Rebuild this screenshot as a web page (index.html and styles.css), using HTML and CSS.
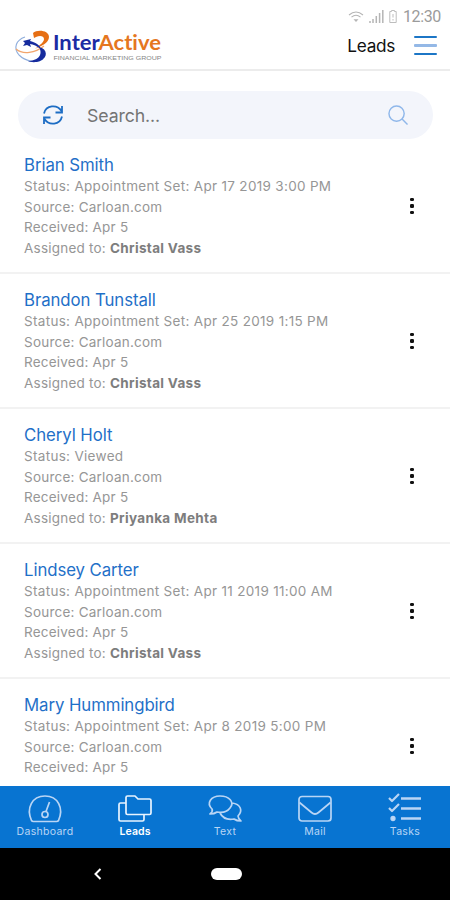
FILE: index.html
```
<!DOCTYPE html>
<html lang="en">
<head>
<meta charset="utf-8">
<title>Leads</title>
<link rel="stylesheet" href="styles.css">
</head>
<body>
<div class="app">
  <div class="status-bar">
    <svg width="16" height="12" viewBox="0 0 16 12" fill="none" stroke="#b5b5b5" stroke-width="1.1"><path d="M1 4Q8-2 15 4M3.5 6.2Q8 2.4 12.5 6.2"/><path d="M5.5 8.2h5L8 11z" fill="#b5b5b5" stroke="none"/></svg>
    <svg class="signal" width="15" height="13" viewBox="0 0 15 13" stroke="#b5b5b5" stroke-width="1.5"><path d="M1 13v-2M4 13V9M7.3 13V6M10.6 13V3M13.8 13V0"/></svg>
    <svg class="battery" width="8" height="13" viewBox="0 0 8 13" fill="none" stroke="#bdbdbd"><path d="M2.5 1.5v-1h3v1h1.7v11H.8v-11zM4 4v3.5M4 9v1.5"/></svg>
    <span class="clock">12:30</span>
  </div>
  <header class="header">
    <svg class="logo" width="148" height="36" viewBox="0 0 148 36">
      <path d="M10 6C1 9-2 17 4 24c6 6 17 9 24 4" fill="none" stroke="#8eaddc" stroke-width="1.1"/>
      <path d="M1 18c7 6 19 4 28-3" fill="none" stroke="#f2a56c" stroke-width="1.3"/>
      <path d="M18 2c4-4 16-3 16 4 0 6-8 9-14 12 5-4 9-7 9-10 0-3-4-4-8-2l-2 1z" fill="#e66f14"/>
      <path d="M8 10l8-2-1 2c5 1 10 4 12 9-5-4-9-6-12-6l1 3-4-2-4 1 2-3zM24 16c9 2 9 11 1 14-5 2-10 1-12 0 8 0 16-5 11-14z" fill="#162b9d"/>
      <text class="brand" x="38" y="19.300" textLength="108" lengthAdjust="spacingAndGlyphs"><tspan fill="#1b2ba3">Inter</tspan><tspan fill="#e5771f">Active</tspan></text>
      <text class="tagline" x="38.500" y="29.300" textLength="108" lengthAdjust="spacingAndGlyphs">FINANCIAL MARKETING GROUP</text>
    </svg>
    <h1 class="title">Leads</h1>
    <div class="menu"><i></i><i></i><i></i></div>
  </header>
  <main class="content">
    <div class="search">
      <svg width="22" height="20" viewBox="0 0 22 20" fill="none" stroke="#1d6dc4" stroke-width="1.8"><path d="M2 8.500C4 0 15-1 19.500 6M20 1v6.500h-6.500M20 11.500C18 20 7 21 2.500 14M2 19v-6.500h6.500"/></svg>
      <span class="placeholder">Search...</span>
      <svg class="lens" width="20" height="20" viewBox="0 0 21 21" fill="none" stroke="#8fb7ea" stroke-width="1.500"><circle cx="9" cy="9" r="8"/><path d="M14.500 14.500l6 6"/></svg>
    </div>
    <ul class="leads">
      <li class="lead"><div class="info"><h2>Brian Smith</h2><p class="status">Status: Appointment Set: Apr 17 2019 3:00 PM</p><p>Source: Carloan.com</p><p>Received: Apr 5</p><p>Assigned to: <b>Christal Vass</b></p></div><div class="more"><i></i><i></i><i></i></div></li>
      <li class="lead"><div class="info"><h2>Brandon Tunstall</h2><p class="status">Status: Appointment Set: Apr 25 2019 1:15 PM</p><p>Source: Carloan.com</p><p>Received: Apr 5</p><p>Assigned to: <b>Christal Vass</b></p></div><div class="more"><i></i><i></i><i></i></div></li>
      <li class="lead"><div class="info"><h2>Cheryl Holt</h2><p class="status">Status: Viewed</p><p>Source: Carloan.com</p><p>Received: Apr 5</p><p>Assigned to: <b>Priyanka Mehta</b></p></div><div class="more"><i></i><i></i><i></i></div></li>
      <li class="lead"><div class="info"><h2>Lindsey Carter</h2><p class="status">Status: Appointment Set: Apr 11 2019 11:00 AM</p><p>Source: Carloan.com</p><p>Received: Apr 5</p><p>Assigned to: <b>Christal Vass</b></p></div><div class="more"><i></i><i></i><i></i></div></li>
      <li class="lead"><div class="info"><h2>Mary Hummingbird</h2><p class="status">Status: Appointment Set: Apr 8 2019 5:00 PM</p><p>Source: Carloan.com</p><p>Received: Apr 5</p></div><div class="more"><i></i><i></i><i></i></div></li>
    </ul>
  </main>
  <nav class="tabs">
    <a class="tab"><svg width="34" height="30" viewBox="0 0 34 30"><path d="M3.500 26.500C-2 14 4 2 17 2s19 12 13.500 24.500q-.6 1-2 1h-23q-1.400 0-2-1zM18 17.500l3.500-9.500"/><circle cx="17" cy="20.500" r="3"/></svg><span>Dashboard</span></a>
    <a class="tab active"><svg width="34" height="30" viewBox="0 0 34 30"><path d="M8 3.500q0-1.500 1.500-1.500H17l3 3h11.500q1.500 0 1.500 1.500V19q0 1.500-1.500 1.500h-22Q8 20.500 8 19zM8 9H2.500Q1 9 1 10.500v15Q1 27 2.500 27h22q1.500 0 1.500-1.500v-5"/></svg><span>Leads</span></a>
    <a class="tab"><svg width="34" height="30" viewBox="0 0 34 30"><path d="M4 15C-2 9 3 2 12 2s15 6 10 12c-3 4-8 5-13 4-2 1.500-4 2-7 2 2-1.500 3-3 2-5zM24 9c9 1 11 8 6 13 0 2 1 3 3 5-3 0-5-.5-7-2-6 1-11 0-14-6"/></svg><span>Text</span></a>
    <a class="tab"><svg width="34" height="30" viewBox="0 0 34 30"><rect x="1" y="2.500" width="32" height="24.500" rx="3"/><path d="M1.500 8.500l12 10q3.500 3 7 0l12-10"/></svg><span>Mail</span></a>
    <a class="tab"><svg width="34" height="30" viewBox="0 0 34 30"><path d="M1 4l3 3 7-7M1 14l3 3 7-7" stroke-width="2.200"/><path d="M13 4.500h20M13 14.500h20M13 24.500h20" stroke-width="2.400"/><circle cx="5" cy="24.500" r="1.800" fill="#c5dcf6"/></svg><span>Tasks</span></a>
  </nav>
  <div class="system-nav">
    <svg width="9" height="12" viewBox="0 0 9 12" fill="none" stroke="#fff" stroke-width="2"><path d="M7.500 1l-5 5 5 5"/></svg>
    <span class="home"></span>
  </div>
</div>
</body>
</html>
```
FILE: styles.css
```
* { box-sizing: border-box; margin: 0; padding: 0; }
body { background: #fff; font-family: Inter, "Liberation Sans", sans-serif; }
.app { width: 450px; height: 900px; display: flex; flex-direction: column; overflow: hidden; }
.status-bar { height: 26px; padding: 7px 9px 0 0; display: flex; justify-content: flex-end; align-items: center; flex: none; }
.signal { margin-left: 5px; }
.battery { margin: 0 6px 0 5px; }
.clock { font: 16px/19px Roboto, sans-serif; color: #9b9b9b; width: 38px; white-space: nowrap; letter-spacing: -.4px; }
.header { height: 45px; border-bottom: 2px solid #ececec; display: flex; align-items: center; padding: 0 13px 4px 15px; flex: none; }
.logo { display: block; margin-top: 7px; overflow: visible; }
.brand { font: bold 20px Lato, sans-serif; font-variant-ligatures: none; }
.tagline { font: 6px "Liberation Sans", sans-serif; fill: #858585; }
.title { margin-left: auto; font-size: 17.2px; line-height: 22px; font-weight: 400; letter-spacing: -.3px; color: #111; }
.menu { width: 23px; height: 19px; margin-left: 19px; display: flex; flex-direction: column; justify-content: space-between; }
.menu i { height: 2px; background: #1c76c6; border-radius: 1px; }
.menu i:nth-child(2) { height: 3px; background: #94b8e6; }
.content { height: 715px; overflow: hidden; padding-top: 20px; flex: none; }
.search { height: 48px; margin: 0 17px 0 18px; padding: 0 25px 0 24px; border-radius: 24px; background: #f3f5fb; display: flex; align-items: center; }
.placeholder { margin-left: 23px; font-size: 17.7px; letter-spacing: -.1px; color: #747474; }
.lens { margin-left: auto; }
.leads { list-style: none; }
.lead { height: 135px; padding: 16px 36px 0 24px; border-bottom: 2px solid #f2f2f2; display: flex; justify-content: space-between; }
.lead h2 { font-size: 16.8px; line-height: 21px; font-weight: 400; letter-spacing: -.08px; color: #1f70c8; white-space: nowrap; }
.lead p { font-size: 13.5px; line-height: 20.6px; color: #969696; letter-spacing: .22px; white-space: nowrap; }
.lead .status { letter-spacing: .31px; }
.lead b { font-weight: 700; letter-spacing: .33px; color: #7d7d7d; }
.more { width: 4px; height: 16px; margin-top: 43px; display: flex; flex-direction: column; justify-content: space-between; align-items: center; }
.more i { width: 3.4px; height: 3.4px; border-radius: 40%; background: #111; }
.tabs { height: 62px; background: #0874d1; display: grid; grid-template-columns: repeat(5, 1fr); flex: none; }
.tab { display: flex; flex-direction: column; align-items: center; padding-top: 8px; color: #b9d5f5; }
.tab svg { fill: none; stroke: #b9d5f5; stroke-width: 1.7; stroke-linejoin: round; overflow: visible; }
.tab span { font-size: 10.5px; line-height: 13px; margin-top: 1px; letter-spacing: .3px; }
.tab.active { color: #fff; }
.tab.active svg { stroke: #e8f4ff; }
.tab.active span { font-weight: 600; letter-spacing: .1px; }
.system-nav { flex: 1; background: #000; display: flex; align-items: center; padding-left: 93px; }
.home { width: 31px; height: 12px; border-radius: 6px; background: #fff; margin-left: 109px; }
```
